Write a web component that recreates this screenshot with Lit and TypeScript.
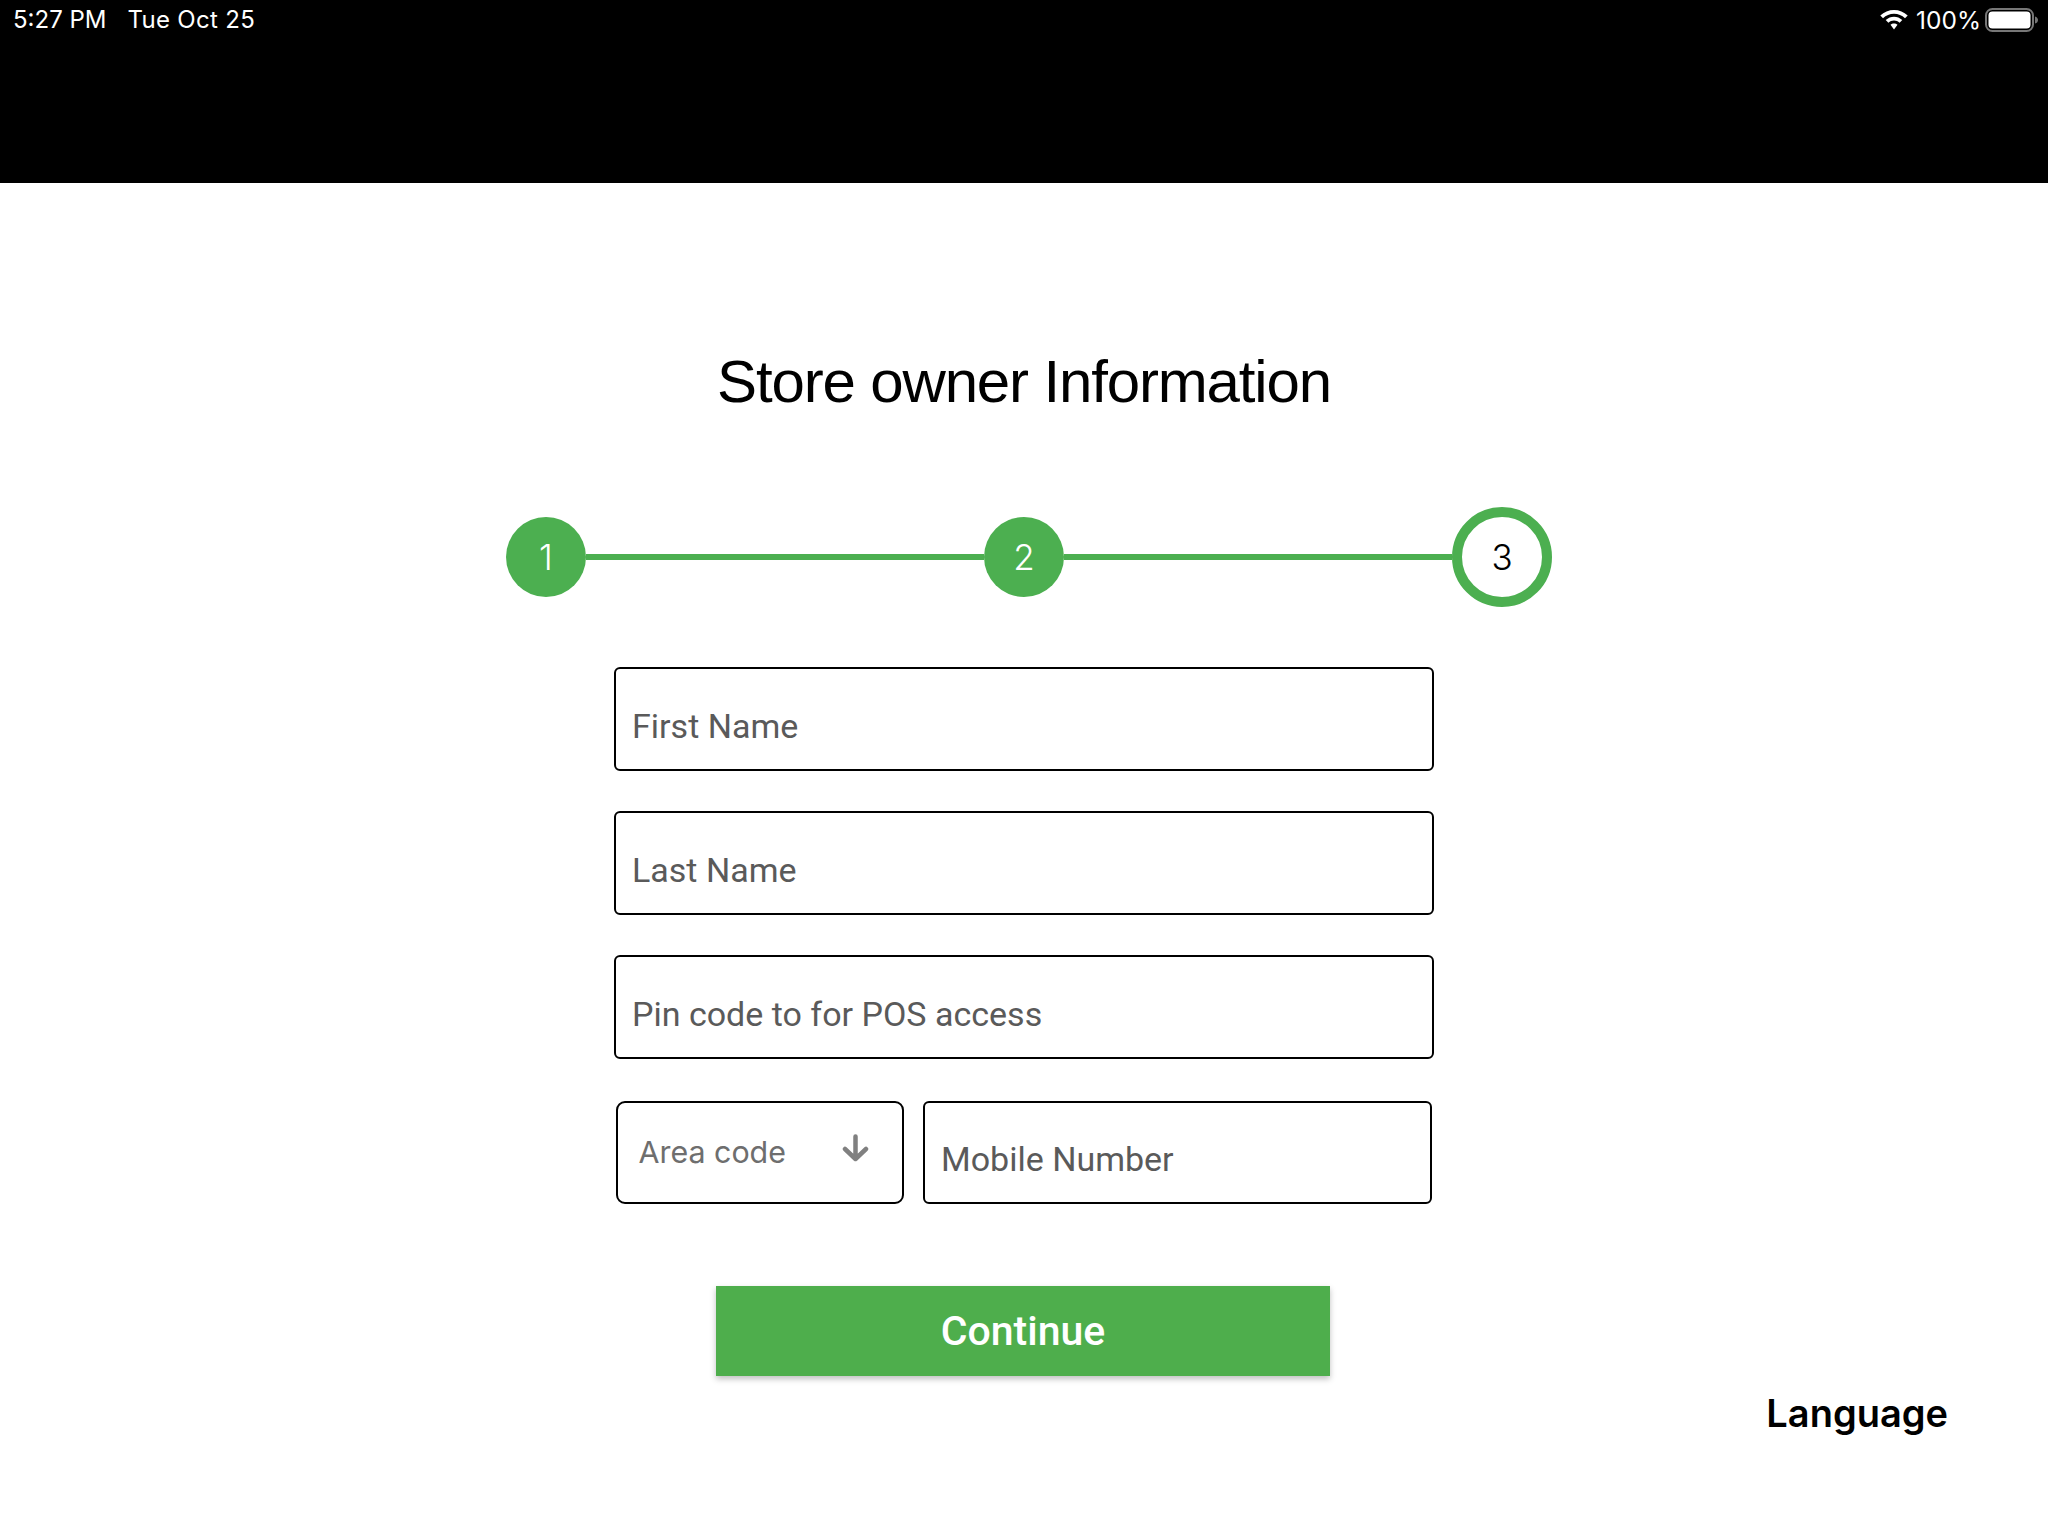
import { LitElement, html, css } from "lit";
import { customElement } from "lit/decorators.js";

@customElement("app-root")
export class AppRoot extends LitElement {
  static styles = css`
    :host { display: block; width: 2048px; height: 1536px; background: #fff; font-family: Roboto, "Liberation Sans", sans-serif; overflow: hidden; }
    .status { height: 183px; background: #000; color: #fff; display: flex; justify-content: space-between; align-items: flex-start; padding: 8px 10px 0 13px; box-sizing: border-box; font-family: Inter, Roboto, sans-serif; font-size: 24px; line-height: 24px; }
    .left { display: flex; gap: 21px; }
    .date { letter-spacing: 0.3px; }
    .right { display: flex; align-items: center; gap: 4px; }
    .wifi { margin-right: 4px; }
    .pct { font-size: 24.5px; }
    h1 { margin: 0; padding-top: 169px; height: 60px; line-height: 60px; text-align: center; font-family: "Liberation Sans", Arial, sans-serif; font-weight: 400; font-size: 60px; letter-spacing: -1.150px; color: #000; box-sizing: content-box; }
    .stepper { display: flex; align-items: center; width: 1046px; margin: 95px 0 0 506px; height: 100px; }
    .step { flex: none; box-sizing: border-box; border-radius: 50%; display: flex; align-items: center; justify-content: center; font-family: Inter, Roboto, sans-serif; font-size: 35px; font-weight: 350; width: 80px; height: 80px; background: #4caf50; color: #fff; }
    .step.cur { width: 100px; height: 100px; background: #fff; border: 10px solid #4caf50; color: #000; }
    .line { flex: 1; height: 6px; background: #4caf50; }
    .line.first { flex: none; width: 398px; }
    .form { display: flex; flex-direction: column; gap: 40px; width: 820px; margin: 60px 0 0 614px; }
    .field { box-sizing: border-box; height: 104px; border: 2px solid #000; border-radius: 6px; display: flex; align-items: flex-end; padding: 0 0 23px 16px; font-size: 34px; line-height: 40px; color: #5a5a5a; }
    .row { display: flex; gap: 19px; padding: 0 2px 0 2px; margin-top: 2px; }
    .area { flex: none; width: 288px; box-sizing: border-box; height: 103px; border: 2.500px solid #000; border-radius: 9px; display: flex; align-items: center; justify-content: space-between; padding: 0 33px 0 20.500px; font-family: Inter, Roboto, sans-serif; font-size: 30.400px; color: #6e6e6e; }
    .area span { margin-top: -1px; }
    .area svg { display: block; margin-top: -9px; }
    .mobile { flex: 1; height: 103px; }
    .btn { box-sizing: border-box; width: 614px; height: 90px; margin: 82px 0 0 716px; background: #4eae4c; color: #fff; display: flex; align-items: center; justify-content: center; font-size: 41px; font-weight: 500; box-shadow: 0 3px 6px rgba(0,0,0,.25); }
    .lang-row { display: flex; justify-content: flex-end; padding: 12px 100px 0 0; }
    .lang { font-family: Inter, Roboto, sans-serif; font-size: 38px; font-weight: 600; line-height: 50px; color: #000; }
  `;

  render() {
    return html`
      <div class="status">
        <div class="left"><span>5:27 PM</span><span class="date">Tue Oct 25</span></div>
        <div class="right">
          <svg class="wifi" width="28" height="20" viewBox="0 0 28 20"><path d="M14 0C8.800 0 4 2 .300 5.500L3 8.200C6 5.400 9.800 3.800 14 3.800S22 5.400 25 8.200L27.700 5.500C24 2 19.200 0 14 0ZM14 6.700C11 6.700 8.100 7.900 5.700 10.100L8.400 12.800C10 11.400 11.900 10.500 14 10.500S18 11.400 19.600 12.800L22.300 10.100C19.900 7.900 17 6.700 14 6.700ZM14 13.400C12.700 13.400 11.500 13.900 10.500 14.800L14 19.500L17.500 14.800C16.500 13.900 15.300 13.400 14 13.400Z" fill="#fff"/></svg>
          <span class="pct">100%</span>
          <svg width="53" height="24" viewBox="0 0 53 24"><rect x="1" y="1" width="47" height="22" rx="6.500" fill="none" stroke="#777" stroke-width="2"/><rect x="3.500" y="3.500" width="42" height="17" rx="4" fill="#fff"/><path d="M50 8.500C52 9 53 10.500 53 12S52 15 50 15.500Z" fill="#777"/></svg>
        </div>
      </div>
      <h1>Store owner Information</h1>
      <div class="stepper">
        <div class="step">1</div><div class="line first"></div>
        <div class="step">2</div><div class="line"></div>
        <div class="step cur">3</div>
      </div>
      <div class="form">
        <div class="field">First Name</div>
        <div class="field">Last Name</div>
        <div class="field">Pin code to for POS access</div>
        <div class="row">
          <div class="area"><span>Area code</span>
            <svg width="27" height="28" viewBox="0 0 27 28"><path d="M13.500 2.500V25M3 15L13.500 25L24 15" fill="none" stroke="#808080" stroke-width="4.500" stroke-linecap="round" stroke-linejoin="round"/></svg>
          </div>
          <div class="field mobile">Mobile Number</div>
        </div>
      </div>
      <div class="btn">Continue</div>
      <div class="lang-row"><span class="lang">Language</span></div>
    `;
  }
}
